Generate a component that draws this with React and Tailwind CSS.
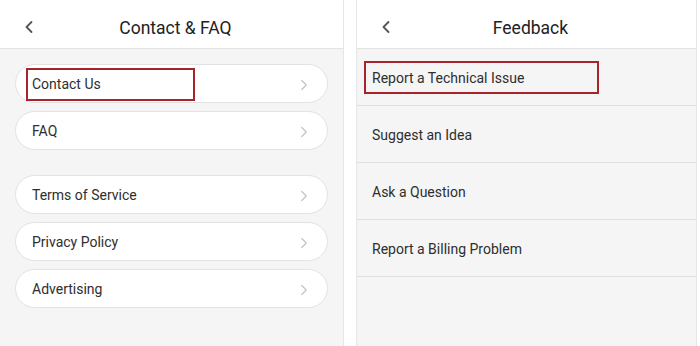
import { ChevronLeft, ChevronRight } from 'lucide-react'

const FONT = { fontFamily: 'Roboto, "Liberation Sans", sans-serif' }

function Header({ title }) {
  return (
    <div className="relative flex h-[49px] items-center justify-center border-b border-[#e3e3e3] bg-white pl-[8px] pt-[8px]">
      <ChevronLeft className="absolute left-[19px] top-[17px] h-[20px] w-[20px] text-[#555]" strokeWidth={2.2} />
      <span className="text-[17.5px] text-[#222]">{title}</span>
    </div>
  )
}

function Pill({ label, marked }) {
  return (
    <div className="relative flex h-[39px] items-center justify-between rounded-full border border-[#e2e2e2] bg-white pl-[16px] pr-[14px] pt-[2px]">
      <span className="text-[14px] text-[#2e2e2e]">{label}</span>
      <ChevronRight className="h-[18px] w-[18px] text-[#c4c4c4]" strokeWidth={1.6} />
      {marked && (
        <div className="absolute left-[10px] top-[3px] h-[33px] w-[169px] border-2 border-[#a8242a]" />
      )}
    </div>
  )
}

function Row({ label, marked }) {
  return (
    <div className="relative flex h-[57px] items-center border-b border-[#e0e0e0] pl-[15px] pt-[2px]">
      <span className="text-[14px] text-[#2e2e2e]">{label}</span>
      {marked && (
        <div className="absolute left-[7px] top-[12px] h-[33px] w-[235px] border-2 border-[#a8242a]" />
      )}
    </div>
  )
}

export default function App() {
  return (
    <div className="flex h-[346px] w-[700px] bg-white" style={FONT}>
      {/* Contact & FAQ */}
      <div className="flex w-[344px] flex-col border-r border-[#e6e6e6] bg-[#f5f5f5]">
        <Header title="Contact & FAQ" />
        <div className="flex flex-col gap-[8px] px-[15px] pt-[15px]">
          <Pill label="Contact Us" marked />
          <Pill label="FAQ" />
        </div>
        <div className="flex flex-col gap-[8px] px-[15px] pt-[25px]">
          <Pill label="Terms of Service" />
          <Pill label="Privacy Policy" />
          <Pill label="Advertising" />
        </div>
      </div>

      <div className="w-[12px]" />

      {/* Feedback */}
      <div className="flex w-[341px] flex-col border-x border-[#e6e6e6] bg-[#f5f5f5]">
        <Header title="Feedback" />
        <Row label="Report a Technical Issue" marked />
        <Row label="Suggest an Idea" />
        <Row label="Ask a Question" />
        <Row label="Report a Billing Problem" />
      </div>
    </div>
  )
}
